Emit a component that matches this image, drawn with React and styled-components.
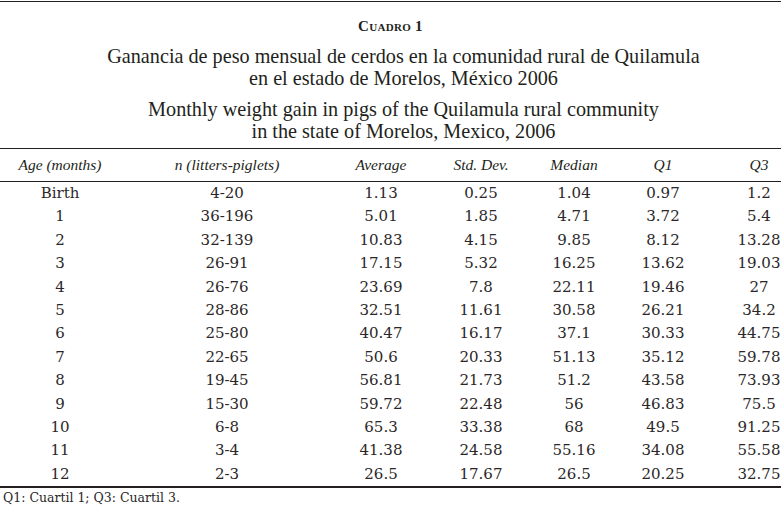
import React from 'react';
import styled, { createGlobalStyle } from 'styled-components';

const GlobalStyle = createGlobalStyle`
  html, body {
    margin: 0;
    padding: 0;
    background: #ffffff;
  }
`;

const Page = styled.div`
  width: 781px;
  overflow: hidden;
  padding-top: 1px;
  color: #231f20;
`;

const Caption = styled.header`
  border-top: 1.5px solid #231f20;
  padding: 14px 0 6px;
  text-align: center;
  font-family: "Liberation Serif", "Times New Roman", serif;
`;

const Label = styled.div`
  font-size: 15px;
  line-height: 20px;
  font-weight: bold;
  font-variant: small-caps;
  letter-spacing: 0.3px;
  margin-bottom: 9px;
`;

const Title = styled.div`
  font-size: 20.2px;
  line-height: 22px;
  padding-left: 26px;
  & + & {
    margin-top: 9px;
  }
`;

const Table = styled.div`
  border-top: 1.5px solid #231f20;
  border-bottom: 2px solid #231f20;
`;

const Row = styled.div`
  display: grid;
  grid-template-columns: 96px 238px 70px 130px 56px 122px 70px;
  padding-left: 12px;
  width: 794px;
  box-sizing: border-box;
`;

const HeadRow = styled(Row)`
  height: 33px;
  border-bottom: 1.5px solid #231f20;
  box-sizing: border-box;
  align-items: start;
  padding-top: 7px;
`;

const HeadCell = styled.div`
  text-align: center;
  white-space: nowrap;
  font-family: "Liberation Serif", "Times New Roman", serif;
  font-style: italic;
  font-size: 15.5px;
  line-height: 18px;
`;

const Cell = styled.div`
  text-align: center;
  white-space: nowrap;
  font-family: "DejaVu Serif", "Liberation Serif", serif;
  font-size: 15px;
  line-height: 23.4px;
  color: #2b2728;
`;

const Footnote = styled.div`
  font-family: "DejaVu Serif", "Liberation Serif", serif;
  font-size: 12.5px;
  line-height: 18px;
  padding-left: 3px;
  padding-top: 1px;
  color: #2b2728;
`;

const headers = ['Age (months)', 'n (litters-piglets)', 'Average', 'Std. Dev.', 'Median', 'Q1', 'Q3'];

const rows = [
  ['Birth', '4-20', '1.13', '0.25', '1.04', '0.97', '1.2'],
  ['1', '36-196', '5.01', '1.85', '4.71', '3.72', '5.4'],
  ['2', '32-139', '10.83', '4.15', '9.85', '8.12', '13.28'],
  ['3', '26-91', '17.15', '5.32', '16.25', '13.62', '19.03'],
  ['4', '26-76', '23.69', '7.8', '22.11', '19.46', '27'],
  ['5', '28-86', '32.51', '11.61', '30.58', '26.21', '34.2'],
  ['6', '25-80', '40.47', '16.17', '37.1', '30.33', '44.75'],
  ['7', '22-65', '50.6', '20.33', '51.13', '35.12', '59.78'],
  ['8', '19-45', '56.81', '21.73', '51.2', '43.58', '73.93'],
  ['9', '15-30', '59.72', '22.48', '56', '46.83', '75.5'],
  ['10', '6-8', '65.3', '33.38', '68', '49.5', '91.25'],
  ['11', '3-4', '41.38', '24.58', '55.16', '34.08', '55.58'],
  ['12', '2-3', '26.5', '17.67', '26.5', '20.25', '32.75'],
];

export default function App() {
  return (
    <Page>
      <GlobalStyle />
      <Caption>
        <Label>Cuadro 1</Label>
        <Title>
          Ganancia de peso mensual de cerdos en la comunidad rural de Quilamula
          <br />
          en el estado de Morelos, México 2006
        </Title>
        <Title>
          Monthly weight gain in pigs of the Quilamula rural community
          <br />
          in the state of Morelos, Mexico, 2006
        </Title>
      </Caption>
      <Table>
        <HeadRow>
          {headers.map((h) => (
            <HeadCell key={h}>{h}</HeadCell>
          ))}
        </HeadRow>
        {rows.map((r) => (
          <Row key={r[0]}>
            {r.map((v, i) => (
              <Cell key={i}>{v}</Cell>
            ))}
          </Row>
        ))}
      </Table>
      <Footnote>Q1: Cuartil 1; Q3: Cuartil 3.</Footnote>
    </Page>
  );
}
